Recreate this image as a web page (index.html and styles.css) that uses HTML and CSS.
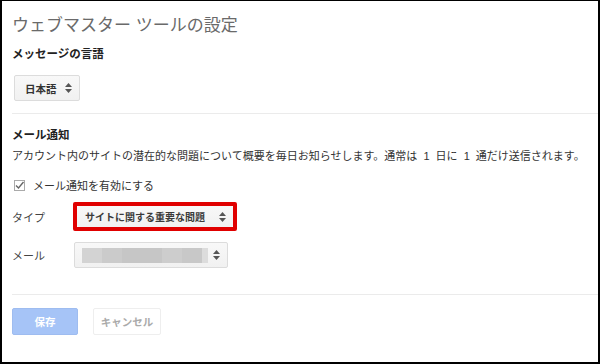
FILE: index.html
```html
<!DOCTYPE html>
<html lang="ja">
<head>
  <meta charset="UTF-8">
  <title>ウェブマスター ツールの設定</title>
  <link rel="stylesheet" href="styles.css">
</head>
<body>
  <div class="frame">
    <h1>ウェブマスター ツールの設定</h1>

    <h2 class="lang-title">メッセージの言語</h2>
    <div class="select lang-select">
      <span>日本語</span>
      <svg class="arrows" width="7" height="10" viewBox="0 0 7 10"><path d="M3.5 0L7 4H0z M3.5 10L7 6H0z" fill="#555"/></svg>
    </div>

    <div class="divider"></div>

    <h2 class="mail-title">メール通知</h2>
    <p class="desc">アカウント内のサイトの潜在的な問題について概要を毎日お知らせします。通常は 1 日に 1 通だけ送信されます。</p>

    <div class="check-row">
      <span class="checkbox">
        <svg width="11" height="11" viewBox="0 0 11 11"><path d="M2 5.5L4.5 8L9.5 2" fill="none" stroke="#666" stroke-width="1.4"/></svg>
      </span>
      <span>メール通知を有効にする</span>
    </div>

    <div class="field type-row">
      <span class="label">タイプ</span>
      <div class="highlight">
        <div class="select type-select">
          <span>サイトに関する重要な問題</span>
          <svg class="arrows" width="7" height="10" viewBox="0 0 7 10"><path d="M3.5 0L7 4H0z M3.5 10L7 6H0z" fill="#555"/></svg>
        </div>
      </div>
    </div>

    <div class="field mail-row">
      <span class="label">メール</span>
      <div class="select mail-select">
        <span class="blurred"></span>
        <svg class="arrows" width="7" height="10" viewBox="0 0 7 10"><path d="M3.5 0L7 4H0z M3.5 10L7 6H0z" fill="#555"/></svg>
      </div>
    </div>

    <div class="divider bottom"></div>

    <div class="buttons">
      <button class="btn save">保存</button>
      <button class="btn cancel">キャンセル</button>
    </div>
  </div>
</body>
</html>
```

FILE: styles.css
```css
body {
  margin: 0;
  background: #fff;
  font-family: Arial, "Noto Sans CJK JP", sans-serif;
  color: #333;
}

.frame {
  box-sizing: border-box;
  width: 600px;
  height: 364px;
  border: 2px solid #000;
  border-top-width: 1px;
  padding-left: 10px;
  overflow: hidden;
}

h1 {
  margin: 15px 0 0;
  font-size: 17px;
  line-height: 20px;
  font-weight: normal;
  color: #6a6a6a;
}

h2 {
  margin: 0;
  font-size: 11.5px;
  line-height: 16px;
  font-weight: bold;
  color: #222;
}

.lang-title {
  margin-top: 10px;
}

.select {
  box-sizing: border-box;
  display: flex;
  align-items: center;
  justify-content: space-between;
  background: linear-gradient(#f8f8f8, #f1f1f1);
  border: 1px solid #dcdcdc;
  border-radius: 2px;
  font-size: 10.5px;
  font-weight: bold;
  color: #333;
}

.arrows {
  flex: none;
}

.lang-select {
  margin: 13px 0 0 2px;
  width: 66px;
  height: 26px;
  padding: 0 7px 0 10px;
}

.divider {
  height: 1px;
  background: #ebebeb;
  margin-top: 12px;
}

.mail-title {
  margin-top: 13px;
}

.desc {
  margin: 6px 0 0;
  font-size: 11px;
  line-height: 14px;
  color: #333;
  word-spacing: 3px;
  white-space: nowrap;
}

.check-row {
  display: flex;
  align-items: center;
  gap: 8px;
  margin-top: 14px;
  height: 16px;
  font-size: 11px;
  color: #333;
}

.checkbox {
  box-sizing: border-box;
  display: flex;
  width: 11px;
  height: 11px;
  margin-left: 2px;
  border: 1px solid #aaa;
  background: #fff;
}

.checkbox svg {
  margin: -1px;
}

.field {
  display: flex;
  align-items: center;
}

.label {
  width: 61px;
  font-size: 11px;
  color: #444;
}

.type-row {
  margin-top: 9px;
}

.highlight {
  border: 4px solid #e00000;
  border-radius: 2px;
}

.type-select {
  width: 156px;
  height: 21px;
  padding: 0 7px 0 8px;
  border: none;
  font-size: 10px;
  color: #3a3a3a;
}

.mail-row {
  margin-top: 11px;
}

.mail-select {
  margin-left: 1px;
  width: 154px;
  height: 26px;
  padding: 0 7px 0 7px;
}

.blurred {
  width: 126px;
  height: 15px;
  background: linear-gradient(90deg,
    #d3d3d3 0, #d3d3d3 20px,
    #cbcbcb 20px, #cbcbcb 40px,
    #c6c6c6 40px, #c6c6c6 80px,
    #cdcdcd 80px, #cdcdcd 100px,
    #c8c8c8 100px, #c8c8c8 120px,
    #dcdcdc 120px);
}

.divider.bottom {
  margin-top: 26px;
}

.buttons {
  display: flex;
  gap: 15px;
  margin-top: 13px;
}

.btn {
  box-sizing: border-box;
  height: 27px;
  border-radius: 2px;
  font-family: Arial, "Noto Sans CJK JP", sans-serif;
  font-size: 10.5px;
  font-weight: bold;
  padding: 0;
}

.save {
  width: 66px;
  background: #a6c4f7;
  border: 1px solid #9ebcf0;
  color: #fff;
}

.cancel {
  width: 68px;
  background: #fff;
  border: 1px solid #eee;
  color: #aaa;
}
```
